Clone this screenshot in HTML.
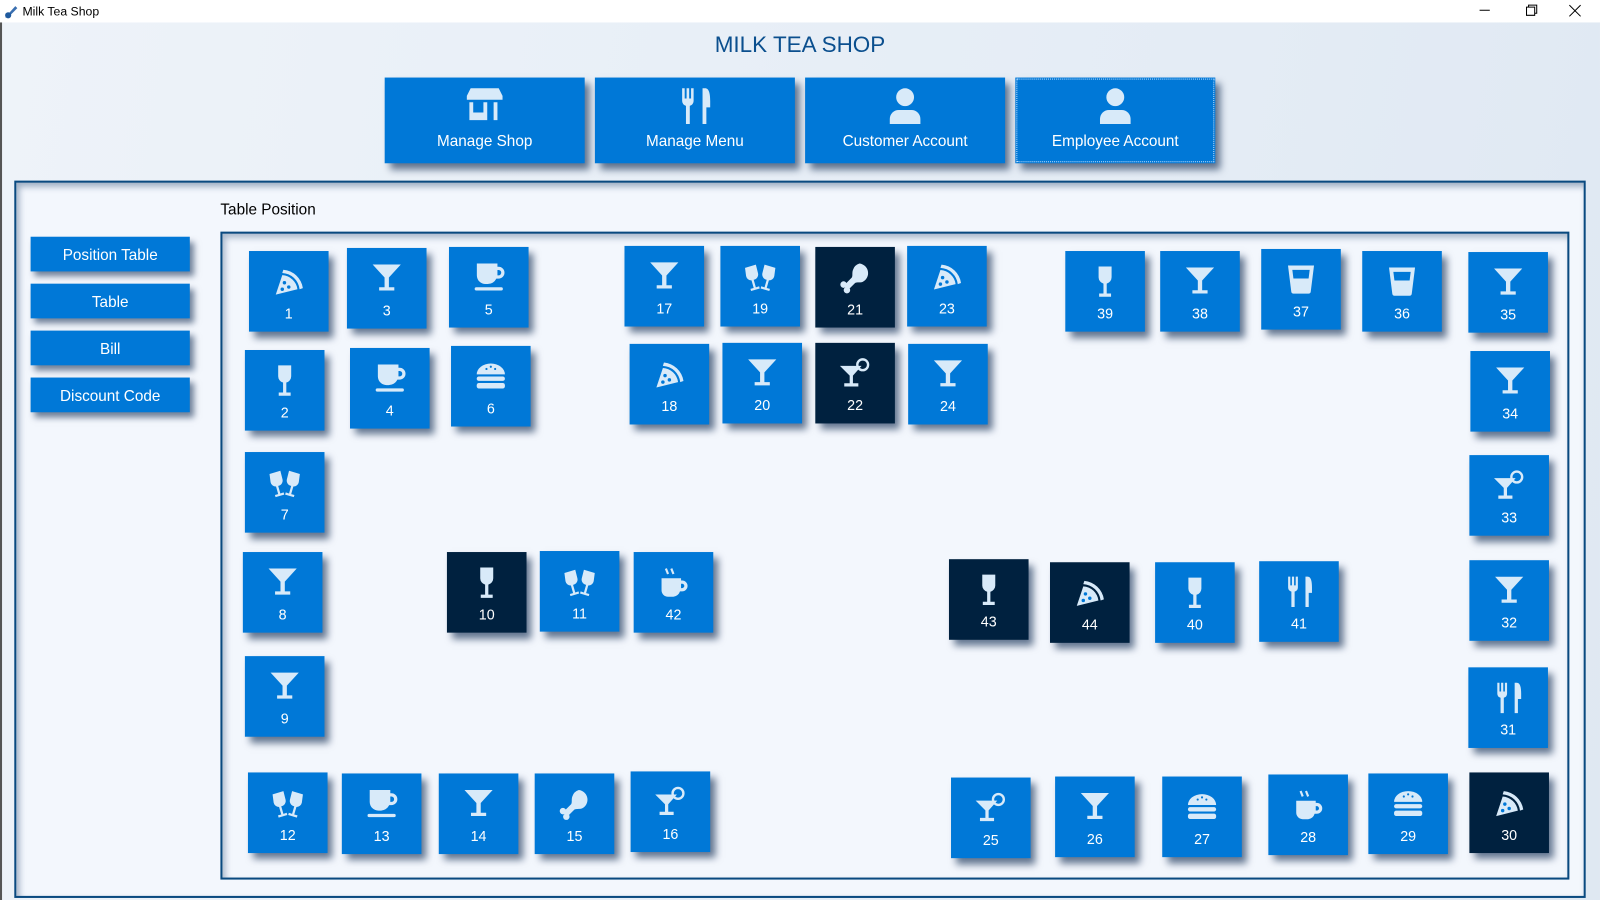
<!DOCTYPE html>
<html><head><meta charset="utf-8">
<style>
*{margin:0;padding:0;box-sizing:border-box}
html,body{width:1600px;height:900px;overflow:hidden;background:#e9f0f8;font-family:"Liberation Sans",sans-serif}
#w{position:absolute;left:0;top:0;width:1568px;height:882px;transform:scale(1.0204);transform-origin:0 0;
background:linear-gradient(100deg,#eef3f9 0%,#e8eff7 40%,#e4ecf5 70%,#dfe8f2 100%)}
.tb{position:absolute;left:0;top:0;width:1568px;height:22px;background:#fff;font-size:12px;color:#000}
.tb span{position:absolute;left:22px;top:4px}
.lb{position:absolute;left:0;top:22px;width:2px;height:860px;background:#555}
h1{position:absolute;left:0;width:1568px;top:31px;text-align:center;font-size:22px;font-weight:normal;color:#0b4f8e}
.tbtn{position:absolute;top:76px;width:196px;height:84px;background:#0078d7;color:#fff;font-size:15px;text-align:center;box-shadow:5px 6px 7px rgba(0,30,70,.6)}
.tbtn svg{position:absolute;left:78px;top:8px;width:40px;height:40px}
.tbtn div{position:absolute;top:54px;width:100%}
.main{position:absolute;left:14px;top:177px;width:1540px;height:703px;border:2px solid #0a4a80;background:#f3f7fd;box-shadow:inset 3px 4px 6px rgba(0,40,90,.35)}
.tp{position:absolute;left:216px;top:197px;font-size:15px;color:#000}
.sb{position:absolute;left:30px;width:156px;height:34px;background:#0078d7;color:#fff;font-size:15px;text-align:center;line-height:37px;box-shadow:4px 5px 6px rgba(0,30,70,.55)}
.inner{position:absolute;left:216px;top:227px;width:1322px;height:635px;border:2px solid #0a4a80;box-shadow:inset 3px 4px 6px rgba(0,40,90,.3)}
.t{position:absolute;width:78px;height:79px;background:#0078d7;color:#fff;font-size:14px;text-align:center;box-shadow:5px 6px 7px rgba(0,30,70,.6)}
.t.d{background:#00213f}
.t svg{position:absolute;left:22px;top:13px;width:34px;height:34px}
.t div{position:absolute;top:53px;width:100%}
</style></head><body><div id="w">
<svg width="0" height="0" style="position:absolute">
<defs>
<symbol id="ck" viewBox="0 0 32 32"><path fill="#d8eaf9" d="M3 3h26L18 15v9h5v3H9v-3h5v-9z"/></symbol>
<symbol id="ckl" viewBox="0 0 32 32"><path fill="#d8eaf9" d="M2 9h20L14 18v7h5v3H6v-3h5v-7z"/><circle cx="23" cy="8" r="5" fill="none" stroke="#d8eaf9" stroke-width="2.2"/></symbol>
<symbol id="wn" viewBox="0 0 32 32"><path fill="#d8eaf9" d="M10 2h12v10a6 6 0 0 1-4.5 5.8V27h4v3h-11v-3h4v-9.2A6 6 0 0 1 10 12z"/></symbol>
<symbol id="cup" viewBox="0 0 32 32"><path fill="#d8eaf9" fill-rule="evenodd" d="M5 3h19v3h1a5.5 5.5 0 0 1 0 11h-2a9 9 0 0 1-8 5h-2a8 8 0 0 1-8-8zM24 9v5h1a2.5 2.5 0 0 0 0-5z"/><rect x="3" y="25" width="26" height="3" rx="1.5" fill="#d8eaf9"/></symbol>
<symbol id="hot" viewBox="0 0 32 32"><path fill="#d8eaf9" fill-rule="evenodd" d="M5 12h18v2h1a5 5 0 0 1 0 10h-2a7 7 0 0 1-6 5h-5a6 6 0 0 1-6-6zM23 17v4h1a2 2 0 0 0 0-4z"/><path stroke="#d8eaf9" stroke-width="2" fill="none" d="M9 3l2 5M14 3l2 5"/></symbol>
<symbol id="pz" viewBox="0 0 32 32"><path fill="#d8eaf9" fill-rule="evenodd" d="M11 5a20 20 0 0 1 18 17l-3 1A17 17 0 0 0 10 8zM10 10a15 15 0 0 1 14 13L4 28z"/><circle cx="12" cy="17" r="1.6" fill="#0078d7"/><circle cx="16" cy="21" r="1.6" fill="#0078d7"/><circle cx="10" cy="23" r="1.6" fill="#0078d7"/></symbol>
<symbol id="bg" viewBox="0 0 32 32"><path fill="#d8eaf9" d="M3 14a13 10 0 0 1 26 0z"/><rect x="3" y="16" width="26" height="4" rx="2" fill="#d8eaf9"/><rect x="3" y="22" width="26" height="5" rx="2" fill="#d8eaf9"/><circle cx="12" cy="9" r="1" fill="#0078d7"/><circle cx="16" cy="7" r="1" fill="#0078d7"/><circle cx="20" cy="9" r="1" fill="#0078d7"/></symbol>
<symbol id="tm" viewBox="0 0 32 32"><path fill="#d8eaf9" fill-rule="evenodd" d="M4 3h24l-3 24a2 2 0 0 1-2 2H9a2 2 0 0 1-2-2zM8 7l1 8h14l1-8z"/></symbol>
<symbol id="ch" viewBox="0 0 32 32"><g fill="#d8eaf9"><path d="M2 8l10-3 2 8a5 5 0 0 1-4 6l2 7 3-1 .6 2-8 2.4-.6-2 3-.8-2-7a5 5 0 0 1-5-4z"/><path d="M30 8l-10-3-2 8a5 5 0 0 0 4 6l-2 7-3-1-.6 2 8 2.4.6-2-3-.8 2-7a5 5 0 0 0 5-4z"/></g></symbol>
<symbol id="dr" viewBox="0 0 32 32"><path fill="#d8eaf9" d="M20 3a9 9 0 0 1 3 17c-3 1-5 0-7 1l-5 5a3 3 0 1 1-4-1 3 3 0 1 1 1-4l5-5c1-2 0-4 1-7A9 9 0 0 1 20 3z"/></symbol>
<symbol id="ut" viewBox="0 0 32 32"><path fill="#d8eaf9" d="M6 2h2v8h1.5V2h2v8H13V2h2v10a4 4 0 0 1-3 3.8V30H9V15.8A4 4 0 0 1 6 12zM24 2c3 0 4 4 4 10v5h-3v13h-3V2z"/></symbol>
<symbol id="us" viewBox="0 0 32 32"><circle cx="16" cy="9" r="7" fill="#d8eaf9"/><path fill="#d8eaf9" d="M4 30v-4a7 7 0 0 1 7-7h10a7 7 0 0 1 7 7v4z"/></symbol>
<symbol id="sh" viewBox="0 0 32 32"><path fill="#d8eaf9" d="M5 2h22l3 6v3H2V8z"/><path fill="#d8eaf9" d="M4 13h3v8h8v-8h3v14H4zM23 13h3v14h-3z"/></symbol>
</defs></svg>
<div class="tb"><span>Milk Tea Shop</span>
<svg style="position:absolute;left:3px;top:3px" width="16" height="16"><path d="M2 14l10-11 2 2-9 9z" fill="#3a6fb0"/><circle cx="5" cy="12" r="3" fill="#1f5a9e"/></svg>
<svg style="position:absolute;left:1448px;top:4px" width="110" height="14"><path d="M2 6h10" stroke="#000"/><path d="M48 3h8v8h-8zM50 3V1h8v8h-2" stroke="#000" fill="none"/><path d="M90 1l11 11M101 1L90 12" stroke="#000"/></svg></div>
<div class="lb"></div>
<h1>MILK TEA SHOP</h1>
<div class="tbtn" style="left:377px"><svg><use href="#sh"/></svg><div>Manage Shop</div></div>
<div class="tbtn" style="left:583px"><svg><use href="#ut"/></svg><div>Manage Menu</div></div>
<div class="tbtn" style="left:789px"><svg><use href="#us"/></svg><div>Customer Account</div></div>
<div class="tbtn" style="left:995px;outline:1px dotted #bfe0ff;outline-offset:-2px"><svg><use href="#us"/></svg><div>Employee Account</div></div>
<div class="main"></div>
<div class="tp">Table Position</div>
<div class="sb" style="top:232px">Position Table</div>
<div class="sb" style="top:278px">Table</div>
<div class="sb" style="top:324px">Bill</div>
<div class="sb" style="top:370px">Discount Code</div>
<div class="inner"></div>
<div class="t" style="left:244px;top:246px"><svg><use href="#pz"/></svg><div>1</div></div>
<div class="t" style="left:340px;top:243px"><svg><use href="#ck"/></svg><div>3</div></div>
<div class="t" style="left:440px;top:242px"><svg><use href="#cup"/></svg><div>5</div></div>
<div class="t" style="left:612px;top:241px"><svg><use href="#ck"/></svg><div>17</div></div>
<div class="t" style="left:706px;top:241px"><svg><use href="#ch"/></svg><div>19</div></div>
<div class="t d" style="left:799px;top:242px"><svg><use href="#dr"/></svg><div>21</div></div>
<div class="t" style="left:889px;top:241px"><svg><use href="#pz"/></svg><div>23</div></div>
<div class="t" style="left:1044px;top:246px"><svg><use href="#wn"/></svg><div>39</div></div>
<div class="t" style="left:1137px;top:246px"><svg><use href="#ck"/></svg><div>38</div></div>
<div class="t" style="left:1236px;top:244px"><svg><use href="#tm"/></svg><div>37</div></div>
<div class="t" style="left:1335px;top:246px"><svg><use href="#tm"/></svg><div>36</div></div>
<div class="t" style="left:1439px;top:247px"><svg><use href="#ck"/></svg><div>35</div></div>
<div class="t" style="left:240px;top:343px"><svg><use href="#wn"/></svg><div>2</div></div>
<div class="t" style="left:343px;top:341px"><svg><use href="#cup"/></svg><div>4</div></div>
<div class="t" style="left:442px;top:339px"><svg><use href="#bg"/></svg><div>6</div></div>
<div class="t" style="left:617px;top:337px"><svg><use href="#pz"/></svg><div>18</div></div>
<div class="t" style="left:708px;top:336px"><svg><use href="#ck"/></svg><div>20</div></div>
<div class="t d" style="left:799px;top:336px"><svg><use href="#ckl"/></svg><div>22</div></div>
<div class="t" style="left:890px;top:337px"><svg><use href="#ck"/></svg><div>24</div></div>
<div class="t" style="left:1441px;top:344px"><svg><use href="#ck"/></svg><div>34</div></div>
<div class="t" style="left:240px;top:443px"><svg><use href="#ch"/></svg><div>7</div></div>
<div class="t" style="left:1440px;top:446px"><svg><use href="#ckl"/></svg><div>33</div></div>
<div class="t" style="left:238px;top:541px"><svg><use href="#ck"/></svg><div>8</div></div>
<div class="t d" style="left:438px;top:541px"><svg><use href="#wn"/></svg><div>10</div></div>
<div class="t" style="left:529px;top:540px"><svg><use href="#ch"/></svg><div>11</div></div>
<div class="t" style="left:621px;top:541px"><svg><use href="#hot"/></svg><div>42</div></div>
<div class="t d" style="left:930px;top:548px"><svg><use href="#wn"/></svg><div>43</div></div>
<div class="t d" style="left:1029px;top:551px"><svg><use href="#pz"/></svg><div>44</div></div>
<div class="t" style="left:1132px;top:551px"><svg><use href="#wn"/></svg><div>40</div></div>
<div class="t" style="left:1234px;top:550px"><svg><use href="#ut"/></svg><div>41</div></div>
<div class="t" style="left:1440px;top:549px"><svg><use href="#ck"/></svg><div>32</div></div>
<div class="t" style="left:240px;top:643px"><svg><use href="#ck"/></svg><div>9</div></div>
<div class="t" style="left:1439px;top:654px"><svg><use href="#ut"/></svg><div>31</div></div>
<div class="t" style="left:243px;top:757px"><svg><use href="#ch"/></svg><div>12</div></div>
<div class="t" style="left:335px;top:758px"><svg><use href="#cup"/></svg><div>13</div></div>
<div class="t" style="left:430px;top:758px"><svg><use href="#ck"/></svg><div>14</div></div>
<div class="t" style="left:524px;top:758px"><svg><use href="#dr"/></svg><div>15</div></div>
<div class="t" style="left:618px;top:756px"><svg><use href="#ckl"/></svg><div>16</div></div>
<div class="t" style="left:932px;top:762px"><svg><use href="#ckl"/></svg><div>25</div></div>
<div class="t" style="left:1034px;top:761px"><svg><use href="#ck"/></svg><div>26</div></div>
<div class="t" style="left:1139px;top:761px"><svg><use href="#bg"/></svg><div>27</div></div>
<div class="t" style="left:1243px;top:759px"><svg><use href="#hot"/></svg><div>28</div></div>
<div class="t" style="left:1341px;top:758px"><svg><use href="#bg"/></svg><div>29</div></div>
<div class="t d" style="left:1440px;top:757px"><svg><use href="#pz"/></svg><div>30</div></div>
</div></body></html>
